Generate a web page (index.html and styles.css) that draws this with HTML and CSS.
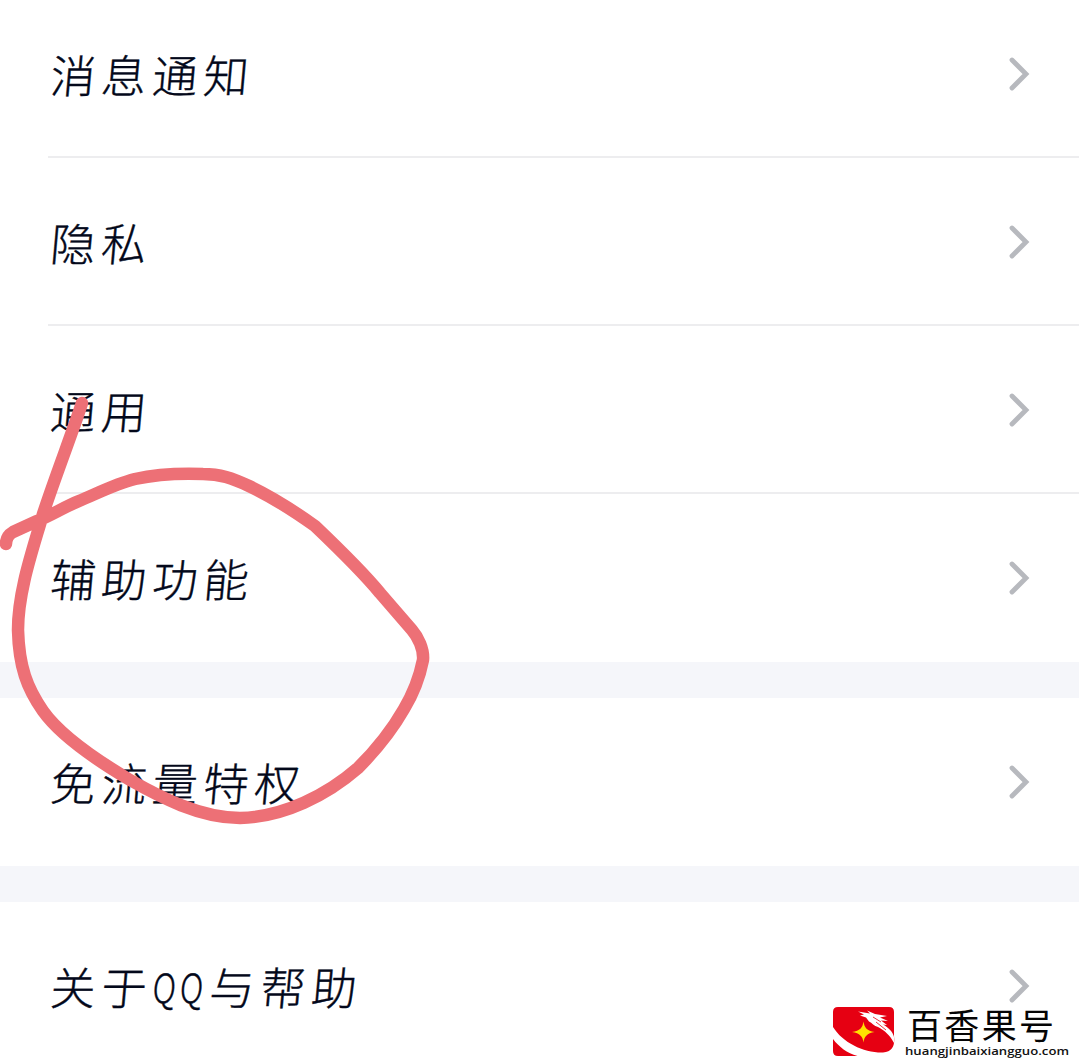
FILE: index.html
```html
<!DOCTYPE html>
<html lang="zh-CN">
<head>
<meta charset="utf-8">
<title>设置</title>
<link rel="stylesheet" href="styles.css">
</head>
<body>
<main class="settings">
  <section class="group">
    <div class="row"><span class="label">消息通知</span><svg class="chevron" viewBox="0 0 24 36"><path d="M4 4L18 18L4 32"/></svg></div>
    <div class="row"><span class="label">隐私</span><svg class="chevron" viewBox="0 0 24 36"><path d="M4 4L18 18L4 32"/></svg></div>
    <div class="row"><span class="label">通用</span><svg class="chevron" viewBox="0 0 24 36"><path d="M4 4L18 18L4 32"/></svg></div>
    <div class="row"><span class="label">辅助功能</span><svg class="chevron" viewBox="0 0 24 36"><path d="M4 4L18 18L4 32"/></svg></div>
  </section>
  <section class="group">
    <div class="row"><span class="label">免流量特权</span><svg class="chevron" viewBox="0 0 24 36"><path d="M4 4L18 18L4 32"/></svg></div>
  </section>
  <section class="group">
    <div class="row"><span class="label">关于<span class="latin">QQ</span>与帮助</span><svg class="chevron" viewBox="0 0 24 36"><path d="M4 4L18 18L4 32"/></svg></div>
  </section>
</main>

<svg class="scribble" viewBox="0 0 440 840">
  <path d="M82 403C74 428 54 480 43 514C34 546 18 590 18 630C19 667 27 688 43 711C60 735 98 761 130 780C160 797 200 818 240 818C284 817 327 795 358 768C375 751 392 730 404 709C413 694 420 675 423 660C424 649 418 637 412 630L380 593C362 571 337 547 315 526C294 511 266 494 249 486C232 478 220 474 203 474C177 473 153 475 135 479C115 484 96 494 79 501C64 507 50 516 37 521L13 532C8 535 6 539 6 544"/>
</svg>

<svg class="watermark" viewBox="0 0 246 56">
  <path d="M8 1H59Q64 1 64 6V30C65 39 63 46 53 46.500C34 47 13 37 3 21V6Q3 1 8 1Z" fill="#e60012"/>
  <path d="M3 33C9 41 17 47 27.500 50H8Q3 50 3 45Z" fill="#e60012"/>
  <path d="M28 5.500L40 7.500L37 4.500L45 8L57 10L50 11.500L58 15L51 14.500L57 19L53 18.500C59 22 63 26 64 31V37C60 29 54 24 48 21C44 20 42 17 39 15.500L36 11.500L30 9.500L34 8.500Z" fill="#fff"/>
  <path d="M43 11L51 16M46 16L56 24" stroke="#e60012" stroke-width=".8" fill="none"/>
  <path d="M33.500 15.500C34.500 22 37 24.500 44.500 26C37 27.500 34.500 30 33.500 36.500C32.500 30 30 27.500 22 26C30 24.500 32.500 22 33.500 15.500Z" fill="#ffe100"/>
  <text class="brand" x="77" y="33" textLength="147" lengthAdjust="spacing">百香果号</text>
  <text class="site" x="75" y="48.500" textLength="164" lengthAdjust="spacingAndGlyphs">huangjinbaixiangguo.com</text>
</svg>
</body>
</html>
```
FILE: styles.css
```css
* {
  box-sizing: border-box;
}

body {
  margin: 0;
  height: 1062px;
  overflow: hidden;
  position: relative;
  background: #f5f6fa;
  font-family: "Noto Sans CJK SC", sans-serif;
  color: #03081a;
}

/* The list is scrolled slightly past its first row's top edge. */
.settings {
  display: flex;
  flex-direction: column;
  gap: 36px;
  margin-top: -10px;
}

.group {
  background: #fff;
}

.row {
  display: flex;
  align-items: center;
  justify-content: space-between;
  height: 168px;
  margin-left: 48px;
  padding-right: 47px;
}

.row:not(:last-child) {
  border-bottom: 2px solid #ededef;
  padding-top: 2px;
}

.label {
  display: inline-flex;
  font-size: 45px;
  font-weight: 300;
  line-height: 60px;
  letter-spacing: 6px;
  white-space: nowrap;
  transform: skewX(-5deg);
  padding-left: 3px;
  -webkit-text-stroke: 0.4px #03081a;
}

.latin {
  width: 57px;
  font-size: 40px;
  letter-spacing: 5px;
  transform: scaleX(0.8);
  transform-origin: left;
}

.chevron {
  width: 24px;
  height: 36px;
  fill: none;
  stroke: #b7b9be;
  stroke-width: 4.8;
  stroke-linecap: round;
}

.scribble {
  position: absolute;
  left: 0;
  top: 0;
  width: 440px;
  height: 840px;
  fill: none;
  stroke: #ed7076;
  stroke-width: 12.5;
  stroke-linecap: round;
  stroke-linejoin: round;
}

.watermark {
  position: absolute;
  left: 830px;
  top: 1006px;
  width: 246px;
  height: 56px;
  overflow: visible;
}

.brand {
  font-size: 35px;
  font-weight: 400;
  fill: #050505;
}

.site {
  font-family: "Open Sans", sans-serif;
  font-size: 11px;
  font-weight: 600;
  fill: #111;
}
```
